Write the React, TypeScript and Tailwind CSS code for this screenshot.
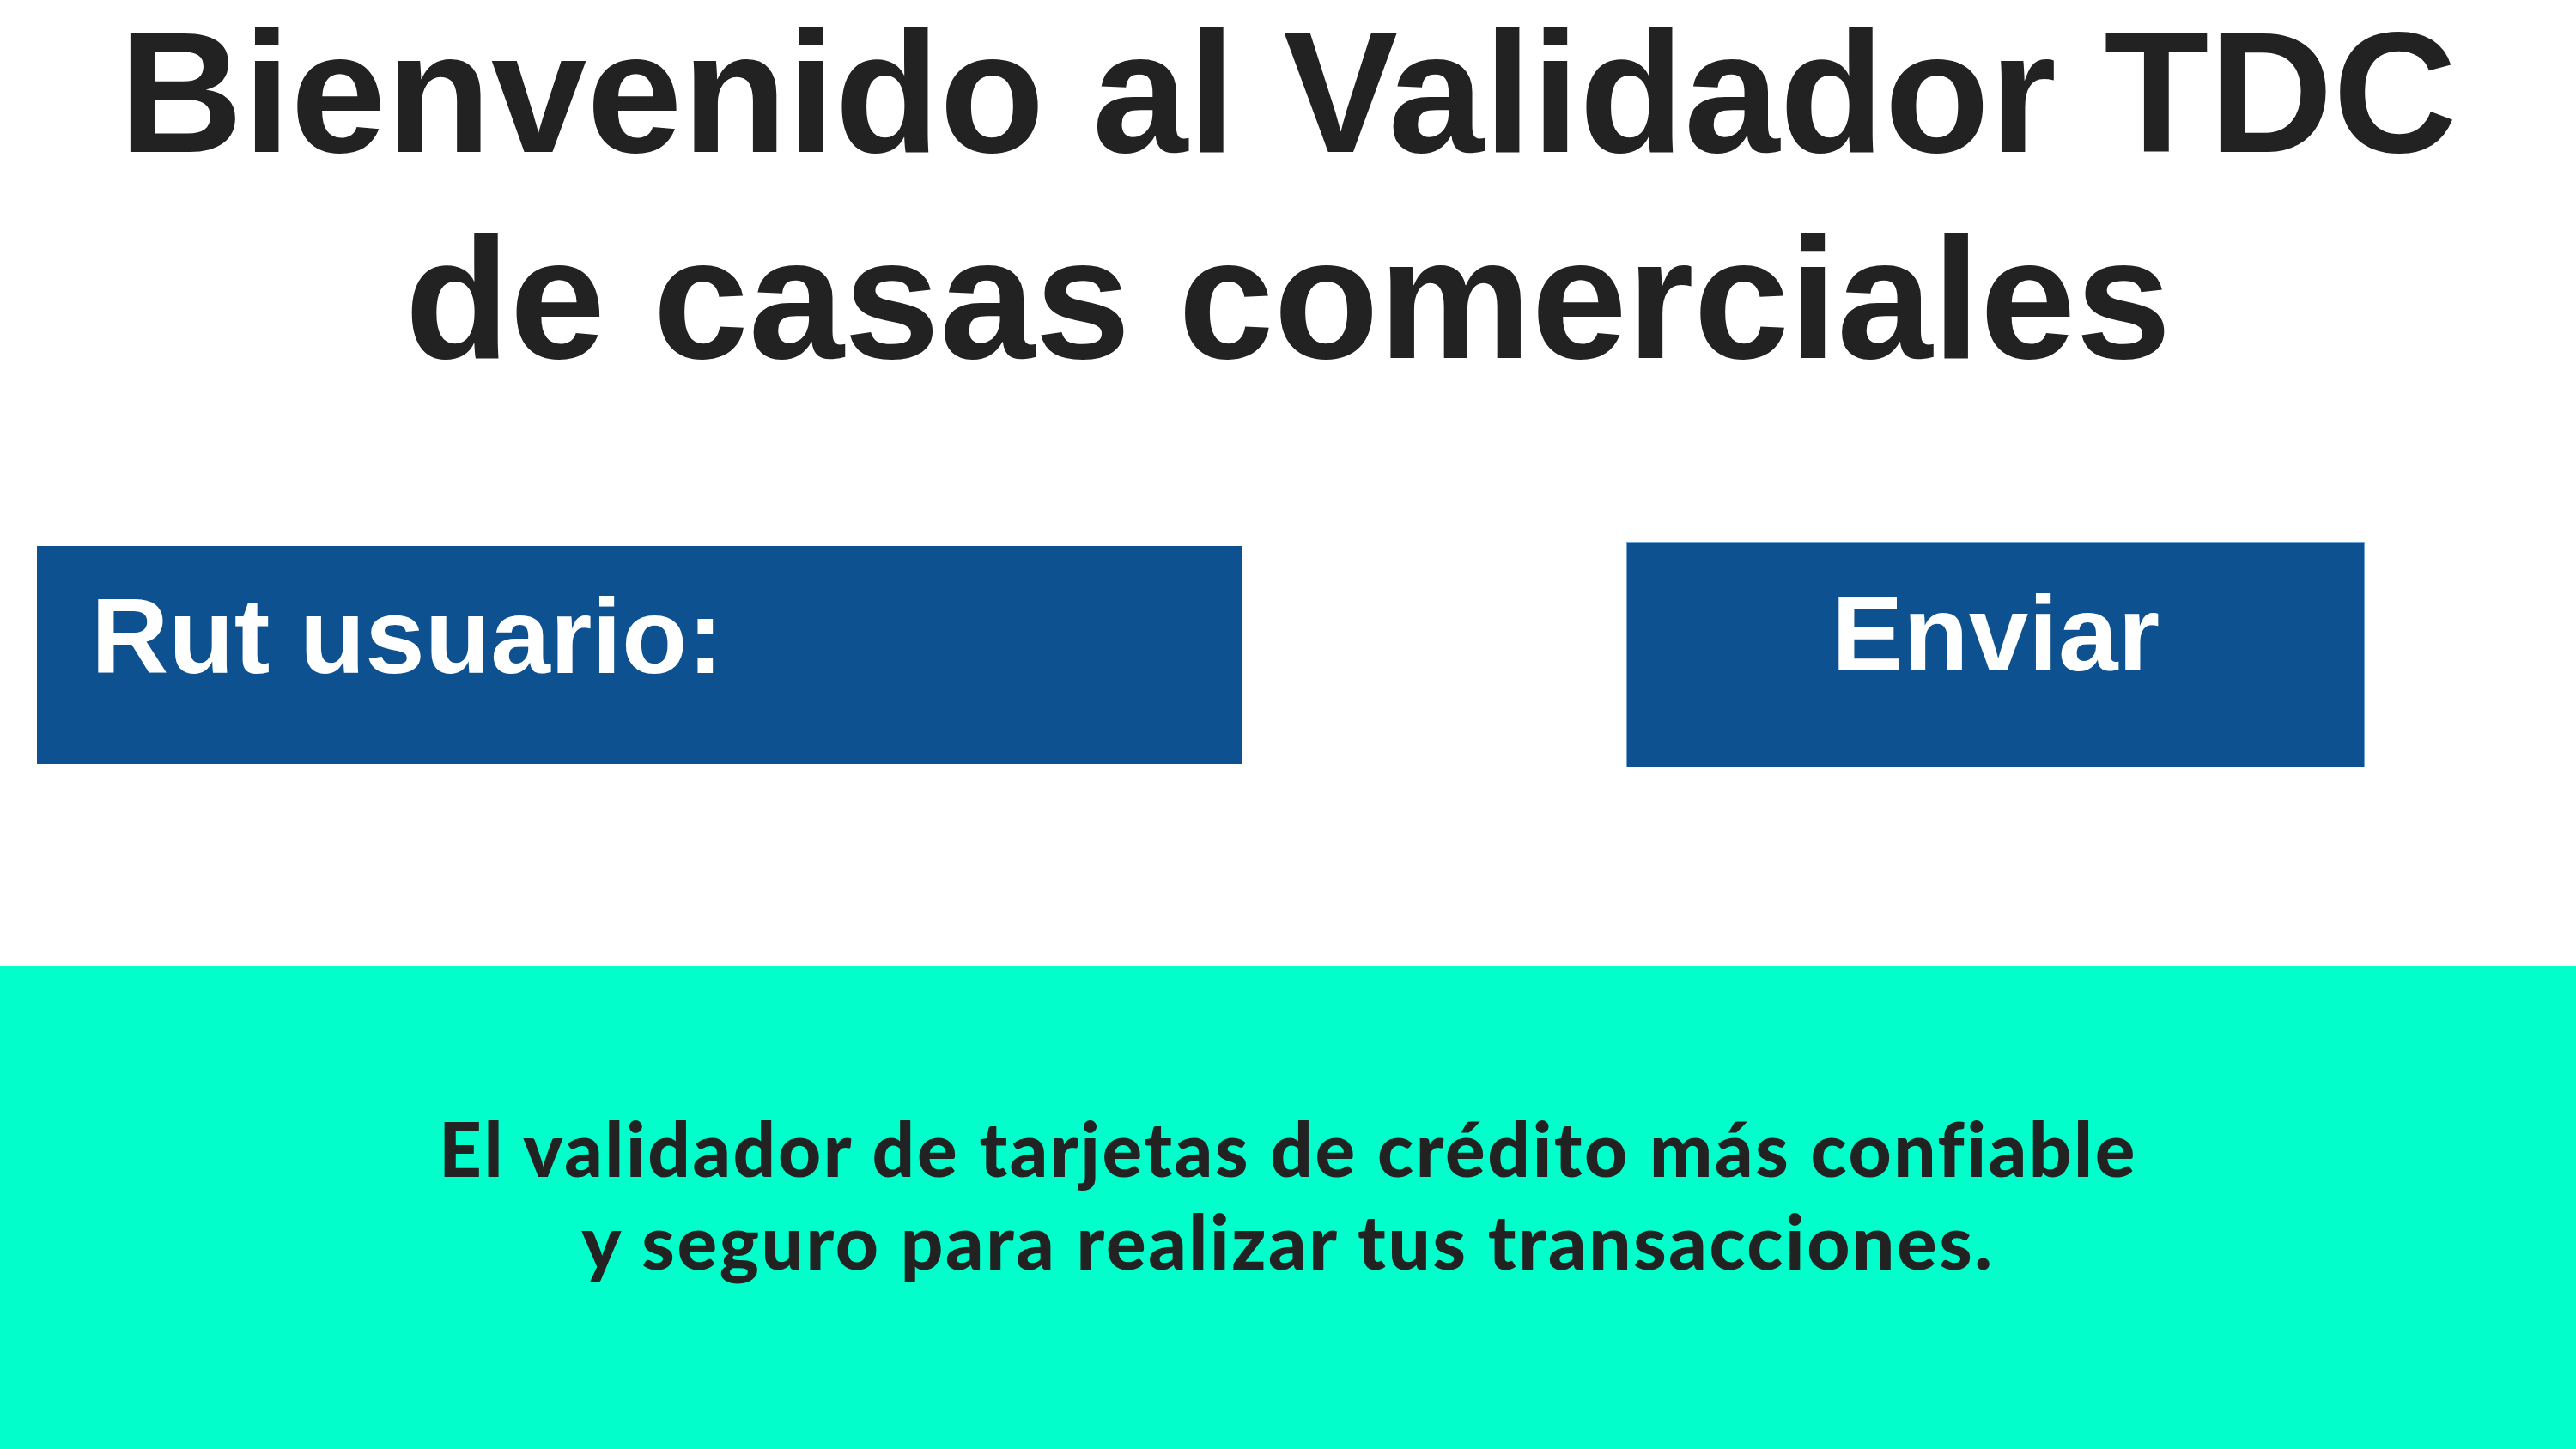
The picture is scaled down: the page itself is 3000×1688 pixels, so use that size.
export default function App() {
  return (
    <div className="min-h-[1688px] w-[3000px] bg-white flex flex-col font-['Liberation_Sans',Arial,sans-serif]">
      {/* Title */}
      <h1 className="-mt-3 text-center text-[200px] leading-[240px] font-bold text-[#222222]">
        Bienvenido al Validador TDC
        <br />
        de casas comerciales
      </h1>

      {/* Form row */}
      <div className="mt-[163px] flex items-center pl-[43px]">
        <div className="h-[254px] w-[1403px] bg-[#0d5190] pt-[33px] pl-[63px] text-[125px] leading-[144px] font-bold text-white">
          Rut usuario:
        </div>
        <button
          type="button"
          className="ml-[448px] flex h-[263px] w-[860px] justify-center border border-[#6fa3d6] bg-[#0d5190] pt-[34px] text-[125px] leading-[144px] font-bold text-white"
        >
          Enviar
        </button>
      </div>

      {/* Footer band */}
      <footer className="mt-auto flex h-[563px] items-center justify-center bg-[#02fecb] pb-[30px]">
        <p className="text-center font-['Lato','Noto_Sans',sans-serif] text-[87px] leading-[108px] font-black tracking-[2.6px] text-[#222222]">
          El validador de tarjetas de crédito más confiable
          <br />y seguro para realizar tus transacciones.
        </p>
      </footer>
    </div>
  );
}
